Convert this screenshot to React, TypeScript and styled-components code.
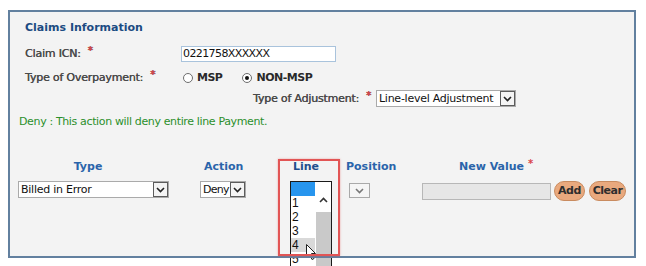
import React from 'react'
import styled, { createGlobalStyle, css } from 'styled-components'

const FONT = `'DejaVu Sans', Verdana, sans-serif`

const GlobalStyle = createGlobalStyle`
  html, body {
    margin: 0;
    padding: 0;
    background: #fff;
  }
  body {
    font-family: ${FONT};
    font-size: 11px;
  }
`

const lineOptions = ['', '1', '2', '3', '4', '5', '6']

const Chevron = ({ up = false, color = '#222' }: { up?: boolean; color?: string }) => (
  <svg width="9" height="6" viewBox="0 0 9 6">
    <path
      d={up ? 'M1 5 L4.5 1.5 L8 5' : 'M1 1 L4.5 4.5 L8 1'}
      fill="none"
      stroke={color}
      strokeWidth="1.6"
    />
  </svg>
)

const Cursor = () => (
  <svg width="11" height="17" viewBox="0 0 11 17">
    <path d="M0.5 0.5 L0.5 13 L3.5 10 L6 15.5 L8 14.5 L5.5 9.5 L9.5 9.5 Z" fill="#fff" stroke="#222" strokeWidth="1" />
  </svg>
)

const Star = () => <Req>*</Req>

export default function App() {
  return (
    <Page>
      <GlobalStyle />
      <Panel>
        <Title>Claims Information</Title>

        <Field>
          <Label>
            Claim ICN:
            <Star />
          </Label>
          <TextInput>0221758XXXXXX</TextInput>
        </Field>

        <Field $compact>
          <Label>
            Type of Overpayment:
            <Star />
          </Label>
          <RadioGroup>
            <RadioOption>
              <Radio />
              MSP
            </RadioOption>
            <RadioOption>
              <Radio $checked />
              NON-MSP
            </RadioOption>
          </RadioGroup>
        </Field>

        <AdjustRow>
          <Label as="span">
            Type of Adjustment:
            <Star />
          </Label>
          <Select $width={140}>
            <SelectText>Line-level Adjustment</SelectText>
            <ArrowBox>
              <Chevron />
            </ArrowBox>
          </Select>
        </AdjustRow>

        <Note>Deny : This action will deny entire line Payment.</Note>

        <Columns>
          <Column $width={182}>
            <Header $center>Type</Header>
            <Select $width={151}>
              <SelectText>Billed in Error</SelectText>
              <ArrowBox>
                <Chevron />
              </ArrowBox>
            </Select>
          </Column>

          <Column $width={78}>
            <Header $indent={4}>Action</Header>
            <Select $width={46}>
              <SelectText $tight>Deny</SelectText>
              <ArrowBox>
                <Chevron />
              </ArrowBox>
            </Select>
          </Column>

          <LineColumn $width={68}>
            <Highlight />
            <Header $indent={15} $dark>
              Line
            </Header>
            <ListBox>
              <Options>
                {lineOptions.map((o, i) => (
                  <Option key={`line-${i}`} $selected={i === 0} $hovered={o === '4'}>
                    {o}
                  </Option>
                ))}
              </Options>
              <ScrollBar>
                <ScrollButton>
                  <Chevron up color="#333" />
                </ScrollButton>
                <ScrollThumb />
              </ScrollBar>
              <CursorMark>
                <Cursor />
              </CursorMark>
            </ListBox>
          </LineColumn>

          <Column $width={76}>
            <Header>Position</Header>
            <EmptySelect>
              <Chevron color="#777" />
            </EmptySelect>
          </Column>

          <Column $width={210}>
            <Header $indent={37}>
              New Value <HeaderStar>*</HeaderStar>
            </Header>
            <ValueRow>
              <ValueInput />
              <PillButton>Add</PillButton>
              <PillButton>Clear</PillButton>
            </ValueRow>
          </Column>
        </Columns>
      </Panel>
    </Page>
  )
}

const Page = styled.div`
  width: 646px;
  height: 266px;
  padding: 10px 0 0 8px;
  box-sizing: border-box;
  overflow: hidden;
`
const Panel = styled.section`
  position: relative;
  width: 628px;
  height: 248px;
  padding-top: 11px;
  box-sizing: border-box;
  background: #f3f3f3;

  &::after {
    content: '';
    position: absolute;
    inset: 0;
    border: 2px solid #62809f;
    pointer-events: none;
  }
`
const Title = styled.h2`
  margin: 0 0 0 17px;
  font-size: 11px;
  line-height: 14px;
  font-weight: bold;
  color: #1c4b82;
`
const Field = styled.div<{ $compact?: boolean }>`
  display: flex;
  align-items: center;
  padding-left: 17px;
  margin-top: ${({ $compact }) => ($compact ? 9 : 11)}px;
  height: ${({ $compact }) => ($compact ? 14 : 16)}px;
`
const Label = styled.label`
  display: inline-block;
  width: 156px;
  flex: none;
  color: #4a4a4a;
  line-height: 14px;
  letter-spacing: -0.2px;
  text-shadow: 0.35px 0 0 #4a4a4a;
  white-space: nowrap;
`
const Req = styled.span`
  display: inline-block;
  margin-left: 7px;
  color: #d9434a;
  font-size: 10px;
  font-weight: bold;
  vertical-align: 3px;
  line-height: 8px;
`
const HeaderStar = styled(Req)`
  margin-left: 0;
`
const TextInput = styled.div`
  width: 155px;
  height: 16px;
  box-sizing: border-box;
  border: 1px solid #a9c3dc;
  background: #fff;
  padding-left: 1px;
  line-height: 14px;
  color: #111;
  letter-spacing: -0.6px;
`
const RadioGroup = styled.div`
  display: flex;
  align-items: center;
  gap: 20px;
  padding-left: 2px;
`
const RadioOption = styled.span`
  display: flex;
  align-items: center;
  gap: 4px;
  font-weight: bold;
  color: #2a2a2a;
  letter-spacing: -0.5px;
  line-height: 14px;
`
const Radio = styled.span<{ $checked?: boolean }>`
  display: inline-flex;
  align-items: center;
  justify-content: center;
  width: 10px;
  height: 10px;
  box-sizing: border-box;
  border: 1px solid #6d6d6d;
  border-radius: 50%;
  background: #fff;

  ${({ $checked }) =>
    $checked &&
    css`
      &::before {
        content: '';
        width: 4px;
        height: 4px;
        border-radius: 50%;
        background: #111;
      }
    `}
`
const AdjustRow = styled.div`
  display: flex;
  align-items: center;
  margin: 5px 0 0 245px;
  height: 17px;

  ${Label} {
    width: auto;
    margin-right: 5px;
  }
`
const Select = styled.div<{ $width: number }>`
  display: flex;
  align-items: center;
  justify-content: space-between;
  width: ${({ $width }) => $width}px;
  height: 17px;
  box-sizing: border-box;
  border: 1px solid #aaa;
  background: #fff;
  padding: 0 0 0 2px;
`
const SelectText = styled.span<{ $tight?: boolean }>`
  color: #111;
  line-height: 14px;
  letter-spacing: ${({ $tight }) => ($tight ? -0.7 : -0.25)}px;
  white-space: nowrap;
`
const ArrowBox = styled.span`
  display: flex;
  align-items: center;
  justify-content: center;
  width: 15px;
  height: 15px;
  box-sizing: border-box;
  border: 1px solid #5c5c5c;
  background: #f4f4f4;
  flex: none;
`
const Note = styled.p`
  margin: 8px 0 0 11px;
  line-height: 14px;
  color: #2b8f2b;
  letter-spacing: -0.36px;
`
const Columns = styled.div`
  display: flex;
  align-items: flex-start;
  margin: 31px 0 0 10px;
`
const Column = styled.div<{ $width: number }>`
  display: flex;
  flex-direction: column;
  align-items: flex-start;
  gap: 7px;
  width: ${({ $width }) => $width}px;
  flex: none;
`
const Header = styled.div<{ $center?: boolean; $indent?: number; $dark?: boolean }>`
  width: ${({ $center }) => ($center ? '140px' : 'auto')};
  padding-left: ${({ $indent }) => $indent || 0}px;
  text-align: ${({ $center }) => ($center ? 'center' : 'left')};
  font-weight: bold;
  line-height: 14px;
  color: ${({ $dark }) => ($dark ? '#1f4d8c' : '#2a64aa')};
  white-space: nowrap;
`
const LineColumn = styled(Column)`
  position: relative;
`
const Highlight = styled.div`
  position: absolute;
  left: 0;
  top: -1px;
  width: 62px;
  height: 97px;
  box-sizing: border-box;
  border: 2px solid #e25555;
  box-shadow: 0 0 2px rgba(226, 85, 85, 0.5);
  pointer-events: none;
  z-index: 1;
`
const ListBox = styled.div`
  position: relative;
  display: flex;
  margin-left: 12px;
  width: 42px;
  height: 92px;
  box-sizing: border-box;
  border: 1px solid #1a1a1a;
  background: #fff;
`
const Options = styled.ul`
  margin: 0;
  padding: 0;
  list-style: none;
  width: 24px;
`
const Option = styled.li<{ $selected?: boolean; $hovered?: boolean }>`
  height: 14px;
  padding-left: 1px;
  font-family: 'Liberation Sans', Arial, sans-serif;
  font-size: 12px;
  line-height: 14px;
  color: #111;
  background: ${({ $selected, $hovered }) =>
    $selected ? '#2795ee' : $hovered ? '#d9d9d9' : 'transparent'};
`
const ScrollBar = styled.div`
  display: flex;
  flex-direction: column;
  width: 16px;
`
const ScrollButton = styled.div`
  display: flex;
  justify-content: center;
  height: 30px;
  padding-top: 15px;
  box-sizing: border-box;
`
const ScrollThumb = styled.div`
  flex: 1;
  margin-left: 1px;
  background: #c9c9c9;
`
const CursorMark = styled.span`
  position: absolute;
  left: 15px;
  top: 62px;
  line-height: 0;
`
const EmptySelect = styled.span`
  display: flex;
  align-items: center;
  justify-content: center;
  margin: 2px 0 0 3px;
  width: 21px;
  height: 15px;
  box-sizing: border-box;
  border: 1px solid #a9a9a9;
  background: #f5f5f5;
`
const ValueRow = styled.div`
  display: flex;
  align-items: center;
  gap: 3px;

  > button:last-child {
    margin-left: 1px;
  }
`
const ValueInput = styled.span`
  display: block;
  width: 129px;
  height: 17px;
  box-sizing: border-box;
  border: 1px solid #b7b7b7;
  background: #e6e6e6;
`
const PillButton = styled.button`
  height: 20px;
  padding: 0 3px;
  border: 1px solid #c98b5f;
  border-radius: 10px;
  background: #e9a97e;
  font-family: ${FONT};
  font-size: 11px;
  font-weight: bold;
  letter-spacing: -0.5px;
  color: #2e2e2e;
  line-height: 16px;
`
